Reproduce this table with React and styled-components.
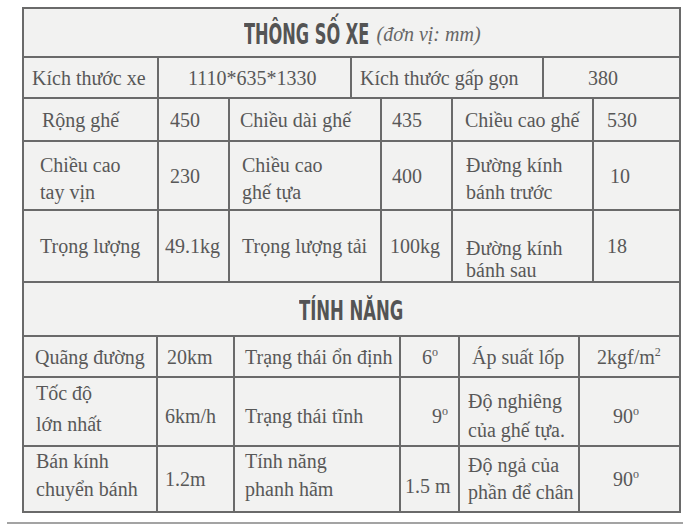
import React from "react";
import styled, { createGlobalStyle } from "styled-components";

const Global = createGlobalStyle`
  html, body { margin: 0; padding: 0; background: #ffffff; }
  body { font-family: "Liberation Serif", "Times New Roman", serif; }
`;

const LINE = "#6a6a6a";

const Page = styled.div`
  width: 700px;
  height: 525px;
  padding-top: 7px;
  box-sizing: border-box;
  overflow: hidden;
`;

const Table = styled.div`
  margin-left: 22px;
  width: 659px;
  box-sizing: border-box;
  border: 2px solid ${LINE};
  background: #f2f2f1;
  display: flex;
  flex-direction: column;
`;

const Row = styled.div`
  display: grid;
  grid-template-columns: ${(p) => p.$cols};
  height: ${(p) => p.$h}px;
  box-sizing: border-box;
  &:not(:first-child) {
    border-top: 2px solid ${LINE};
  }
`;

const Cell = styled.div`
  box-sizing: border-box;
  display: flex;
  flex-direction: column;
  justify-content: center;
  padding-left: ${(p) => p.$pl}px;
  padding-top: ${(p) => (p.$dy > 0 ? p.$dy * 2 : 0)}px;
  padding-bottom: ${(p) => (p.$dy < 0 ? -p.$dy * 2 : 0)}px;
  line-height: ${(p) => p.$lh || 28}px;
  font-size: 20px;
  color: #585858;
  white-space: nowrap;
  &:not(:first-child) {
    border-left: 2px solid ${LINE};
  }
`;

const Sup = styled.span`
  font-size: 12px;
  line-height: 0;
  vertical-align: 8px;
`;

const TitleBar = styled.div`
  height: ${(p) => p.$h}px;
  box-sizing: border-box;
  display: flex;
  align-items: center;
  justify-content: center;
  padding-left: ${(p) => p.$pl || 0}px;
  padding-top: 4px;
  &:not(:first-child) {
    border-top: 2px solid ${LINE};
  }
`;

const Heading = styled.span`
  display: inline-block;
  font-family: "DejaVu Sans Condensed", "DejaVu Sans", sans-serif;
  font-stretch: condensed;
  font-weight: bold;
  font-size: ${(p) => p.$size}px;
  line-height: 1;
  color: #545454;
  transform: scaleX(${(p) => p.$sx});
  transform-origin: left center;
  margin-right: ${(p) => p.$trim}px;
`;

const Unit = styled.span`
  font-family: "Liberation Serif", "Times New Roman", serif;
  font-style: italic;
  font-size: 20px;
  color: #666666;
  margin-left: 7px;
`;

const Rule = styled.div`
  margin: 9px 0 0 7px;
  width: 676px;
  height: 2px;
  background: #a3a3a3;
`;

const deg = (n) => (
  <>
    {n}
    <Sup>o</Sup>
  </>
);

const SIZE_COLS = "133px 193px 192px 137px";
const SPEC_COLS = "133px 71px 152px 71px 141px 87px";
const FEAT_COLS = "132px 77px 166px 59px 120px 101px";

const specRows = [
  {
    cols: SIZE_COLS,
    h: 41,
    cells: [
      { t: ["Kích thước xe"], pl: 8 },
      { t: ["1110*635*1330"], pl: 29 },
      { t: ["Kích thước gấp gọn"], pl: 8 },
      { t: ["380"], pl: 44 },
    ],
  },
  {
    cols: SPEC_COLS,
    h: 43,
    cells: [
      { t: ["Rộng ghế"], pl: 18 },
      { t: ["450"], pl: 11 },
      { t: ["Chiều dài ghế"], pl: 10 },
      { t: ["435"], pl: 10 },
      { t: ["Chiều cao ghế"], pl: 12 },
      { t: ["530"], pl: 13 },
    ],
  },
  {
    cols: SPEC_COLS,
    h: 69,
    cells: [
      { t: ["Chiều cao", "tay vịn"], pl: 16, dy: 3, lh: 27 },
      { t: ["230"], pl: 11 },
      { t: ["Chiều cao", "ghế tựa"], pl: 12, dy: 3, lh: 27 },
      { t: ["400"], pl: 10 },
      { t: ["Đường kính", "bánh trước"], pl: 13, dy: 3, lh: 27 },
      { t: ["10"], pl: 16 },
    ],
  },
  {
    cols: SPEC_COLS,
    h: 72,
    cells: [
      { t: ["Trọng lượng"], pl: 16 },
      { t: ["49.1kg"], pl: 6 },
      { t: ["Trọng lượng tải"], pl: 12 },
      { t: ["100kg"], pl: 8 },
      { t: ["Đường kính", "bánh sau"], pl: 13, dy: 13, lh: 22 },
      { t: ["18"], pl: 13 },
    ],
  },
];

const featRows = [
  {
    cols: FEAT_COLS,
    h: 41,
    cells: [
      { t: ["Quãng đường"], pl: 11 },
      { t: ["20km"], pl: 9 },
      { t: ["Trạng thái ổn định"], pl: 10 },
      { t: [deg("6")], pl: 21 },
      { t: ["Áp suất lốp"], pl: 12 },
      {
        t: [
          <>
            2kgf/m<Sup>2</Sup>
          </>,
        ],
        pl: 17,
      },
    ],
  },
  {
    cols: FEAT_COLS,
    h: 69,
    cells: [
      { t: ["Tốc độ", "lớn nhất"], pl: 12, dy: -7, lh: 31 },
      { t: ["6km/h"], pl: 7 },
      { t: ["Trạng thái tĩnh"], pl: 10 },
      { t: [deg("9")], pl: 31 },
      { t: ["Độ nghiêng", "của ghế tựa."], pl: 8, lh: 29 },
      { t: [deg("90")], pl: 33 },
    ],
  },
  {
    cols: FEAT_COLS,
    h: 66,
    cells: [
      { t: ["Bán kính", "chuyển bánh"], pl: 12, dy: -4, lh: 28 },
      { t: ["1.2m"], pl: 7 },
      { t: ["Tính năng", "phanh hãm"], pl: 10, dy: -4, lh: 28 },
      { t: ["1.5 m"], pl: 4, dy: 7 },
      { t: ["Độ ngả của", "phần để chân"], pl: 8, lh: 27 },
      { t: [deg("90")], pl: 33 },
    ],
  },
];

function DataRow({ row }) {
  return (
    <Row $cols={row.cols} $h={row.h}>
      {row.cells.map((c, i) => (
        <Cell key={i} $pl={c.pl} $dy={c.dy || 0} $lh={c.lh}>
          {c.t.map((line, j) => (
            <span key={j}>{line}</span>
          ))}
        </Cell>
      ))}
    </Row>
  );
}

export default function App() {
  return (
    <>
      <Global />
      <Page>
        <Table>
          <TitleBar $h={47} $pl={22}>
            <Heading $size={29} $sx={0.62} $trim={-77}>
              THÔNG SỐ XE
            </Heading>
            <Unit>(đơn vị: mm)</Unit>
          </TitleBar>
          {specRows.map((r, i) => (
            <DataRow key={"s" + i} row={r} />
          ))}
          <TitleBar $h={54}>
            <Heading $size={26.5} $sx={0.69} $trim={-47}>
              TÍNH NĂNG
            </Heading>
          </TitleBar>
          {featRows.map((r, i) => (
            <DataRow key={"f" + i} row={r} />
          ))}
        </Table>
        <Rule />
      </Page>
    </>
  );
}
